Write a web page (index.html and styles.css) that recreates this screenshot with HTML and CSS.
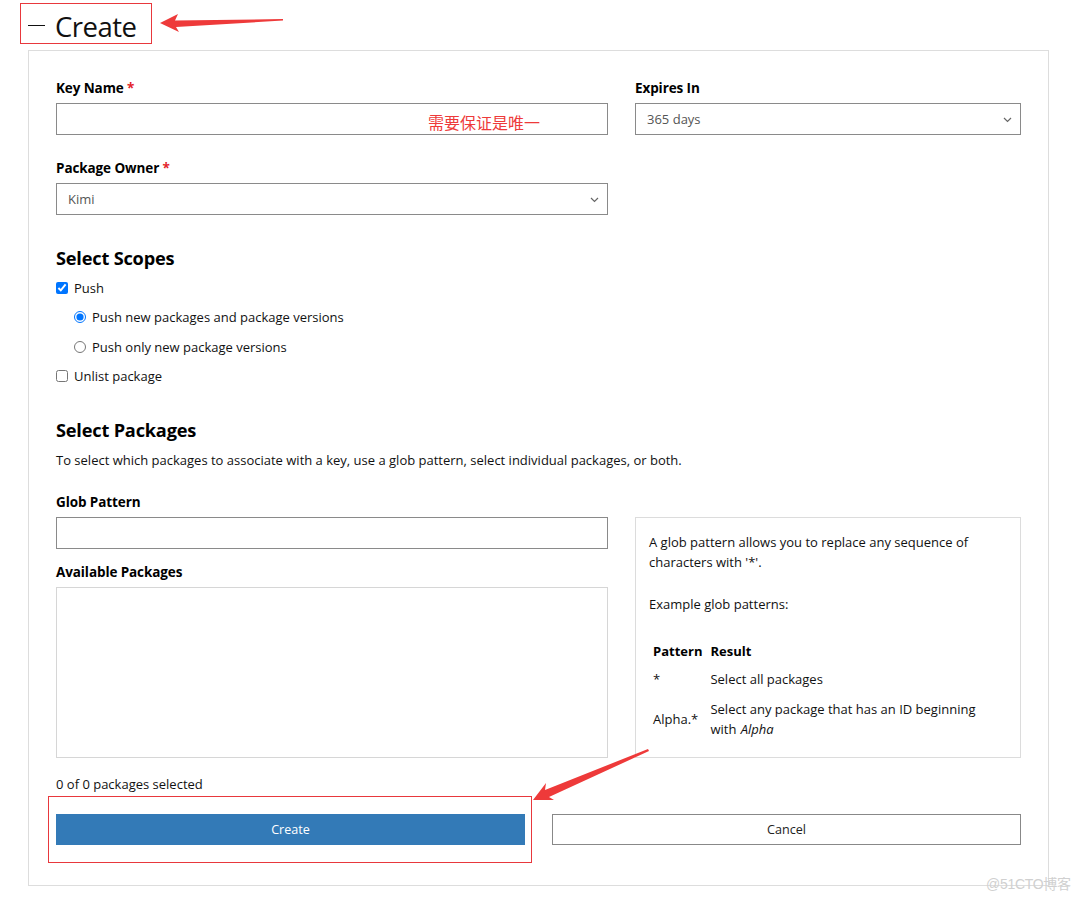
FILE: index.html
```html
<!DOCTYPE html>
<html lang="en">
<head>
<meta charset="utf-8">
<title>Create</title>
<link rel="stylesheet" href="styles.css">
</head>
<body>
<div class="page">
  <h1 class="title"><span class="dash"></span>Create</h1>

  <form class="panel">
    <div class="row-top">
      <div class="field">
        <label class="label">Key Name <span class="req">*</span></label>
        <div class="input-wrap">
          <div class="input"></div>
          <span class="note">需要保证是唯一</span>
        </div>
      </div>
      <div class="field">
        <label class="label">Expires In</label>
        <div class="select"><span>365 days</span>
          <svg class="chev" width="9" height="6" viewBox="0 0 9 6"><path d="M1 1l3.5 3.5L8 1" fill="none" stroke="#666" stroke-width="1.2"/></svg>
        </div>
      </div>
      <div class="field">
        <label class="label">Package Owner <span class="req">*</span></label>
        <div class="select"><span>Kimi</span>
          <svg class="chev" width="9" height="6" viewBox="0 0 9 6"><path d="M1 1l3.5 3.5L8 1" fill="none" stroke="#666" stroke-width="1.2"/></svg>
        </div>
      </div>
    </div>

    <h2 class="heading scopes">Select Scopes</h2>
    <div class="checks">
      <label class="check"><input type="checkbox" checked> Push</label>
      <label class="check sub"><input type="radio" name="push" checked> Push new packages and package versions</label>
      <label class="check sub"><input type="radio" name="push"> Push only new package versions</label>
      <label class="check"><input type="checkbox"> Unlist package</label>
    </div>

    <h2 class="heading packages">Select Packages</h2>
    <p class="desc">To select which packages to associate with a key, use a glob pattern, select individual packages, or both.</p>

    <div class="row-pkg">
      <div class="col-left">
        <label class="label">Glob Pattern</label>
        <div class="input"></div>
        <label class="label avail">Available Packages</label>
        <div class="listbox"></div>
      </div>
      <div class="info">
        <p>A glob pattern allows you to replace any sequence of characters with '*'.</p>
        <p>Example glob patterns:</p>
        <table>
          <thead><tr><th>Pattern</th><th>Result</th></tr></thead>
          <tbody>
            <tr><td>*</td><td>Select all packages</td></tr>
            <tr><td>Alpha.*</td><td>Select any package that has an ID beginning with <em class="alpha">Alpha</em></td></tr>
          </tbody>
        </table>
      </div>
    </div>

    <p class="count">0 of 0 packages selected</p>

    <div class="buttons">
      <button type="button" class="btn primary">Create</button>
      <button type="button" class="btn">Cancel</button>
    </div>
  </form>

  <div class="mark-box"></div>
  <svg class="arrows" width="1084" height="900" viewBox="0 0 1084 900">
    <polygon points="160,23 178,14 175,20.5 283,19 283,20.5 176,27 179,32" fill="#ee3a3a"/>
    <polygon points="533,800 546,783 545,790 648,749 649,751 549,797 554,800" fill="#ee3a3a"/>
  </svg>
  <div class="watermark">@51CTO博客</div>
</div>
</body>
</html>
```

FILE: styles.css
```css
* { box-sizing: border-box; }

html, body {
  margin: 0;
  background: #fff;
}

body {
  font-family: "Open Sans", "Noto Sans", "Noto Sans CJK SC", sans-serif;
  font-size: 13px;
  color: #1a1a1a;
}

.page {
  position: relative;
  width: 1084px;
  min-height: 900px;
  padding-top: 3px;
}

.title {
  display: inline-flex;
  align-items: center;
  margin: 0 0 0 20px;
  height: 41px;
  width: 132px;
  border: 1px solid #e8383d;
  padding: 5px 0 0 6px;
  font-weight: 400;
  font-size: 27.5px;
  color: #111;
  letter-spacing: -0.5px;
}

.dash {
  display: inline-block;
  width: 17px;
  height: 1.6px;
  background: #111;
  margin: 0 10px 1px 1px;
}

.panel {
  display: block;
  margin: 6px 0 0 28px;
  width: 1021px;
  height: 836px;
  border: 1px solid #ddd;
  padding: 28px 27px 0 27px;
}

.row-top {
  display: grid;
  grid-template-columns: 552px 386px;
  column-gap: 27px;
  row-gap: 24px;
}

.field { display: flex; flex-direction: column; }

.label {
  display: block;
  font-weight: 700;
  font-size: 13.5px;
  line-height: 19px;
  height: 19px;
  margin-bottom: 5px;
  color: #000;
  letter-spacing: -0.1px;
}

.req { color: #e3242b; }

.input-wrap { position: relative; }

.input {
  height: 32px;
  border: 1px solid #8a8a8a;
  background: #fff;
}

.note {
  position: absolute;
  left: 372px;
  top: 8px;
  font-family: "Noto Sans CJK SC", sans-serif;
  font-size: 16px;
  line-height: 22px;
  color: #ee3a3a;
  letter-spacing: 0;
}

.select {
  height: 32px;
  border: 1px solid #8a8a8a;
  display: flex;
  align-items: center;
  justify-content: space-between;
  padding: 0 8px 0 11px;
  color: #555;
  font-size: 13px;
}

.chev { margin-top: 1px; }

.heading {
  margin: 0;
  font-weight: 700;
  font-size: 18.2px;
  line-height: 26px;
  color: #000;
  letter-spacing: -0.2px;
}

.scopes { margin-top: 30px; }

.checks {
  display: flex;
  flex-direction: column;
  margin-top: 2px;
}

.check {
  display: flex;
  align-items: center;
  height: 29.5px;
  font-size: 13px;
  color: #111;
}

.check input {
  margin: 0 6px 0 0;
  width: 12px;
  height: 12px;
}

.check.sub { padding-left: 18px; }

.packages { margin-top: 26px; }

.desc {
  margin: 7px 0 0;
  line-height: 20px;
  font-size: 13px;
  color: #111;
}

.row-pkg {
  display: grid;
  grid-template-columns: 552px 386px;
  column-gap: 27px;
  margin-top: 23px;
}

.col-left { display: flex; flex-direction: column; }

.avail { margin-top: 14px; }

.listbox {
  height: 171px;
  border: 1px solid #d6d6d6;
}

.info {
  margin-top: 24px;
  border: 1px solid #dcdcdc;
  padding: 14px 14px 10px 13px;
  font-size: 13px;
  line-height: 20px;
  color: #111;
}

.info p { margin: 0 0 22px; }

.info table {
  border-collapse: collapse;
  margin-top: 25px;
}

.info th {
  text-align: left;
  font-weight: 700;
  padding: 2px 4px 3px;
  color: #000;
}

.info td {
  padding: 5px 4px 5px;
  vertical-align: middle;
}

.info tbody tr:first-child td { padding-top: 5px; padding-bottom: 5px; }

.alpha { padding-left: 1px; }

.count {
  margin: 16px 0 0;
  line-height: 20px;
  font-size: 13px;
  color: #111;
}

.buttons {
  display: grid;
  grid-template-columns: 469px 469px;
  column-gap: 27px;
  margin-top: 20px;
}

.btn {
  height: 31px;
  border: 1px solid #888;
  background: #fff;
  font-family: "Open Sans", "Noto Sans", sans-serif;
  font-size: 12.6px;
  color: #222;
  padding: 0;
}

.btn.primary {
  background: #337ab7;
  border-color: #337ab7;
  color: #fff;
}

.mark-box {
  position: absolute;
  left: 48px;
  top: 796px;
  width: 484px;
  height: 67px;
  border: 1px solid #e8383d;
}

.arrows {
  position: absolute;
  left: 0;
  top: 0;
  pointer-events: none;
}

.watermark {
  position: absolute;
  left: 986px;
  top: 873px;
  font-family: "Liberation Sans", "Noto Sans CJK SC", sans-serif;
  font-size: 14px;
  color: #d0d0d0;
  letter-spacing: -0.3px;
}
```
